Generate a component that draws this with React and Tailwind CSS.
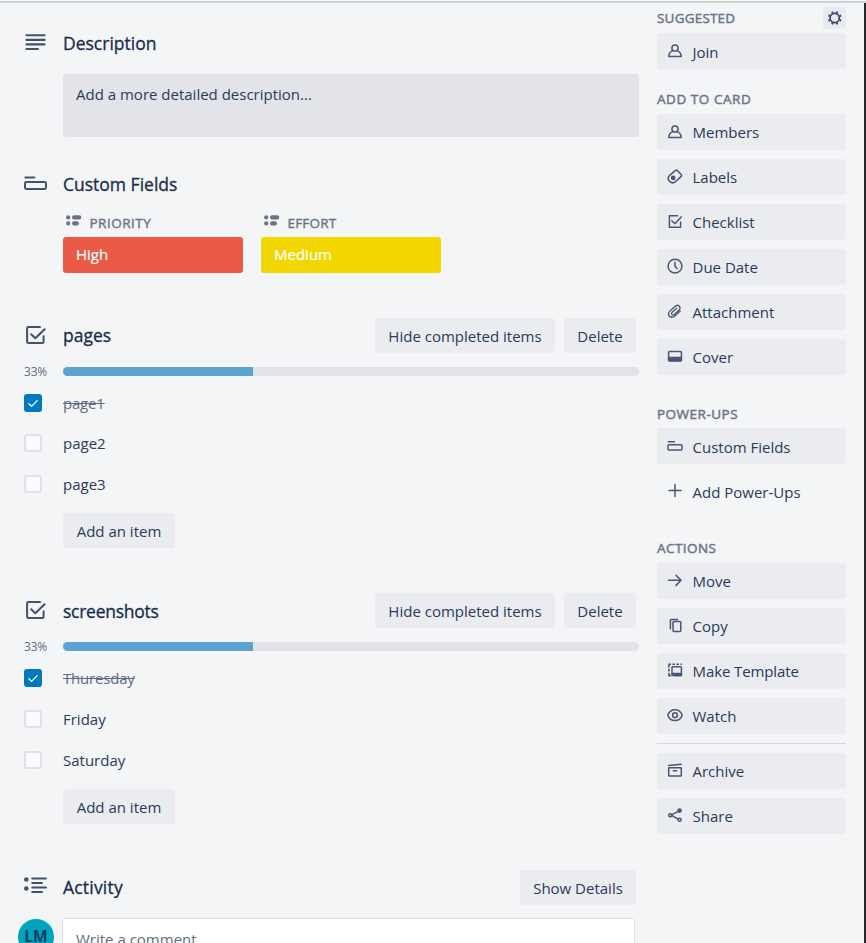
import React from "react";

const S = ({ children, size = 18, className = "", sw = 1.4 }) => (
  <svg
    width={size}
    height={size}
    viewBox={`0 0 ${size} ${size}`}
    fill="none"
    stroke="currentColor"
    strokeWidth={sw}
    strokeLinecap="round"
    strokeLinejoin="round"
    className={`shrink-0 ${className}`}
  >
    {children}
  </svg>
);

const icons = {
  member: (
    <>
      <circle cx="9" cy="6.1" r="3.1" />
      <path d="M7 8.6C4 9.6 2.8 11.4 2.8 14.6H15.2C15.2 11.4 14 9.6 11 8.6" />
    </>
  ),
  label: (
    <>
      <path d="M9.6 2.4L3.6 7.4C1.9 9.2 1.9 11.7 3.6 13.4C5.3 15.1 7.9 15.1 9.7 13.5L15.2 8.4C15.8 7.8 15.7 7.3 15.3 6.8L11.4 2.6C10.9 2.1 10.2 1.9 9.6 2.4Z" />
      <circle cx="7.2" cy="9.9" r="1.6" fill="currentColor" />
    </>
  ),
  check: (
    <>
      <path d="M11.6 2.7H3.4V14.3H14.6V8.9" />
      <path d="M5.8 7.7L8.9 10.8L15.2 3.9" />
    </>
  ),
  clock: (
    <>
      <circle cx="9" cy="8.2" r="6.9" />
      <path d="M9 4.2V8.2L11 10.6" />
    </>
  ),
  clip: (
    <path
      transform="translate(-0.4 -0.6)"
      strokeWidth="1.3"
      d="M14.6 8.6L9.3 13.6C7.6 15.2 5.2 15.2 3.9 13.8C2.6 12.4 2.8 10.2 4.3 8.7L9.7 3.9C10.9 2.8 12.7 2.8 13.7 3.8C14.7 4.9 14.6 6.5 13.5 7.6L8.6 12.1C7.9 12.8 6.9 12.8 6.3 12.2C5.7 11.5 5.8 10.6 6.5 9.9L11 5.8"
    />
  ),
  cover: (
    <>
      <rect x="2.6" y="3.6" width="12.8" height="9.4" rx="1" />
      <path d="M2.6 9.4H15.4V12.6H2.6Z" fill="currentColor" />
    </>
  ),
  fields: (
    <>
      <path d="M2.4 4.8H8.4" />
      <rect x="2" y="7.7" width="14" height="5.2" rx="1" />
    </>
  ),
  plus: <path d="M9 2.6V14.4M3 8.5H15" />,
  arrow: <path d="M2.6 8.3H15M10 3.2L15.1 8.3L10 13.4" />,
  copy: (
    <>
      <rect x="7" y="4.6" width="7.8" height="9.8" rx="0.8" />
      <path d="M4.4 11.8V3.2C4.4 2.7 4.7 2.4 5.2 2.4H11.6" />
    </>
  ),
  template: (
    <>
      <rect x="6" y="4.8" width="9.4" height="8.8" rx="0.8" />
      <path d="M6 11.4H15.4V13.6H9Z" fill="currentColor" />
      <path
        strokeDasharray="2.6 1.4"
        strokeLinecap="butt"
        strokeWidth="1.6"
        d="M2.9 13.4V2.8M2.4 2.2H15.8M2.4 13.6H5.6"
      />
    </>
  ),
  eye: (
    <>
      <path d="M1.8 8.2C3.2 4.6 6 2.8 9 2.8S14.8 4.6 16.2 8.2C14.8 12 12 13.6 9 13.6S3.2 12 1.8 8.2Z" />
      <circle cx="9" cy="8.2" r="2.4" />
    </>
  ),
  archive: (
    <>
      <path d="M2.7 3.6L15.2 2.2" />
      <rect x="2.7" y="5.8" width="12.6" height="8.3" rx="0.6" />
      <path d="M7.4 8.8H10.6" />
    </>
  ),
  share: (
    <>
      <path d="M5 8.2L13.2 3.8M5 8.2L13.2 12.6" />
      <circle cx="4.2" cy="8.2" r="1.5" fill="#eaecf0" />
      <circle cx="13.6" cy="3.6" r="1.6" fill="currentColor" />
      <circle cx="13.6" cy="12.8" r="1.5" fill="#eaecf0" />
    </>
  ),
};

const SideTitle = ({ children, className }) => (
  <h3 className={`text-[13.5px] leading-[18px] text-[#6b7389] [-webkit-text-stroke:0.45px_#6b7389] ${className}`}>
    {children}
  </h3>
);

const SideButton = ({ icon, children, plain, textClass = "" }) => (
  <button
    className={`flex h-9 w-full items-center rounded-[3px] pl-[8.5px] text-left ${plain ? "" : "bg-[#eaecf0]"}`}
  >
    <S sw={1.5} className="text-[#4a5675]">{icons[icon]}</S>
    <span className={`pl-[9px] text-[15px] leading-[22px] text-[#2b3a5b] ${textClass}`}>
      {children}
    </span>
  </button>
);

const Button = ({ children, className }) => (
  <button
    className={`h-[35px] shrink-0 rounded-[3px] bg-[#eaecf0] text-center text-[15px] leading-[36px] whitespace-nowrap text-[#2b3a5b] ${className}`}
  >
    {children}
  </button>
);

const Heading = ({ children, className = "" }) => (
  <h2 className={`flex-1 text-[17.5px] leading-6 text-[#172b4d] [-webkit-text-stroke:0.3px_#172b4d] ${className}`}>
    {children}
  </h2>
);

const FieldGlyph = () => (
  <svg width="16" height="11" viewBox="0 0 16 11" fill="#6b7389" className="shrink-0">
    <circle cx="2.2" cy="2.4" r="2.1" />
    <circle cx="2.2" cy="8.4" r="2.1" />
    <rect x="6" y="0.3" width="9.3" height="4.2" rx="2.1" />
    <rect x="6" y="6.3" width="7" height="4.2" rx="2.1" />
  </svg>
);

const Field = ({ label, value, color, spacing }) => (
  <div className="w-[180px]">
    <div className="flex h-[22px] items-start pl-[3px]">
      <FieldGlyph />
      <span className={`-mt-px pl-[7.5px] text-[13.5px] leading-[18px] text-[#6b7389] [-webkit-text-stroke:0.4px_#6b7389] ${spacing}`}>
        {label}
      </span>
    </div>
    <div className={`h-9 rounded-[3px] pl-[13px] text-[15px] leading-[35px] text-white [-webkit-text-stroke:0.2px_white] ${color}`}>
      {value}
    </div>
  </div>
);

const Item = ({ done, children, className }) => (
  <li className={`flex h-[18px] items-center ${className}`}>
    {done ? (
      <span className="flex size-[18px] items-center justify-center rounded-[3px] bg-[#0079bf]">
        <svg width="12" height="12" viewBox="0 0 12 12" fill="none" stroke="white" strokeWidth="1.3" strokeLinecap="round" strokeLinejoin="round">
          <path d="M1.9 6.8L4.6 9.4L10.2 3.6" />
        </svg>
      </span>
    ) : (
      <span className="size-[18px] rounded-[3px] border-2 border-[#dfe1e6] bg-[#fafbfc]" />
    )}
    <span className={`pl-[21px] text-[15px] leading-[22px] ${done ? "tracking-[-0.2px] text-[#5e6c84] line-through" : "text-[#2b3a5b]"}`}>
      {children}
    </span>
  </li>
);

const Checklist = ({ title, items, className, titleClass, secondGap, addGap }) => (
  <section className={className}>
    <div className="flex h-[35px] items-center pr-[3px]">
      <div className="w-[39px]">
        <S size={24} sw={2}>
          <path d="M16 2.9H4.4C3.6 2.9 3.1 3.4 3.1 4.2V17.7C3.1 18.6 3.6 19.1 4.4 19.1H18.3C19.1 19.1 19.6 18.6 19.6 17.7V12.2" />
          <path d="M7.2 10.2L11.3 14.2L20.6 5.2" />
        </S>
      </div>
      <Heading className={titleClass}>{title}</Heading>
      <Button className="mr-[9px] w-[180px]">Hide completed items</Button>
      <Button className="w-[72px]">Delete</Button>
    </div>
    <div className="mt-[14px] flex h-[9px] items-center">
      <span className="w-[39px] text-[12px] leading-4 tracking-[-0.2px] text-[#5e6c84]">33%</span>
      <div className="h-[9px] flex-1 overflow-hidden rounded-full bg-[#e1e3e8]">
        <div className="h-full w-[33%] bg-[#5ba4cf]" />
      </div>
    </div>
    <ul>
      <Item done className="mt-[18px]">{items[0]}</Item>
      <Item className={secondGap}>{items[1]}</Item>
      <Item className="mt-[22.5px]">{items[2]}</Item>
    </ul>
    <Button className={`ml-[39px] w-28 ${addGap}`}>Add an item</Button>
  </section>
);

export default function App() {
  return (
    <div className="flex h-[943px] w-[866px] flex-col overflow-hidden bg-[#f4f5f7] font-['Open_Sans','Noto_Sans',sans-serif]">
      <div className="h-[3px] shrink-0 border-b-2 border-[#cdd2d4] bg-[#f4f5f7]" />
      <div className="flex min-h-0 flex-1">
        <main className="w-[657px] shrink-0 pl-6 text-[#42526e]">
          <section className="h-[147px] w-[615px] pt-[28px]">
            <div className="flex h-6 items-center">
              <div className="w-[39px]">
                <S size={24} sw={2.1}>
                  <path d="M2.4 4.2H20.6M2.4 8.9H20.6M2.4 13.4H20.6M2.4 18H14" />
                </S>
              </div>
              <Heading>Description</Heading>
            </div>
            <div className="mt-[19px] ml-[39px] h-[63px] rounded-[3px] bg-[#e2e4ea] pt-[9px] pl-[13px] text-[15px] leading-[22px] text-[#2b3a5b]">
              Add a more detailed description...
            </div>
          </section>
          <section className="h-[168px] w-[615px] pt-[22px]">
            <div className="flex h-6 items-center">
              <div className="w-[39px]">
                <S size={24} sw={2}>
                  <path d="M1.4 5.5H10.4" />
                  <rect x="1" y="10" width="21" height="7" rx="1.4" />
                </S>
              </div>
              <Heading>Custom Fields</Heading>
            </div>
            <div className="mt-[19px] ml-[39px] flex gap-[18px]">
              <Field label="PRIORITY" value="High" color="bg-[#eb5a46]" spacing="tracking-[0.5px]" />
              <Field label="EFFORT" value="Medium" color="bg-[#f2d600]" spacing="tracking-[0.2px]" />
            </div>
          </section>
          <Checklist
            className="h-[275px] w-[615px]"
            title="pages"
            titleClass="-mt-0.5"
            items={["page1", "page2", "page3"]}
            secondGap="mt-[22px]"
            addGap="mt-[20.5px]"
          />
          <Checklist
            className="h-[276px] w-[615px]"
            title="screenshots"
            titleClass="tracking-[-0.25px]"
            items={["Thuresday", "Friday", "Saturday"]}
            secondGap="mt-[23px]"
            addGap="mt-[20.5px]"
          />
          <section className="w-[615px]">
            <div className="flex h-9 items-center pr-[3px]">
              <div className="w-[39px]">
                <S size={24} sw={2}>
                  <circle cx="2.3" cy="4.5" r="1.3" fill="currentColor" />
                  <circle cx="2.3" cy="13.5" r="1.3" fill="currentColor" />
                  <path d="M8.2 3.5H22M8.2 8H18M8.2 12.5H22M8.2 17H18" />
                </S>
              </div>
              <Heading className="tracking-[0.2px]">Activity</Heading>
              <Button className="w-[116px]">Show Details</Button>
            </div>
            <div className="-ml-1.5 flex pt-[13px]">
              <div className="mt-px size-9 shrink-0 rounded-full bg-[#00a3bf] text-center text-[15.5px] leading-[35px] font-bold text-[#0d3c61]">
                LM
              </div>
              <div className="ml-2 h-12 w-[573px] rounded-[3px] border border-[#dfe1e6] bg-white pt-[9px] pl-[13px] text-[15px] leading-[22px] text-[#5e6c84]">
                Write a comment...
              </div>
            </div>
          </section>
        </main>
        <aside className="w-[189px] shrink-0">
          <div className="flex h-[30px] items-start justify-between">
            <SideTitle className="pt-1.5 tracking-[0.2px]">SUGGESTED</SideTitle>
            <div className="mt-1 flex h-[22px] w-[23px] items-center justify-center rounded-[3px] bg-[#e9ebf1] text-[#34466a]">
              <S size={16} sw={1.7}>
                <circle cx="7.7" cy="8" r="4.6" />
                <path strokeWidth="2.2" strokeLinecap="butt" d="M9.8 3L10.3 1.7M12.7 5.9L14 5.4M12.7 10.1L14 10.6M9.8 13L10.3 14.3M5.6 13L5.1 14.3M2.7 10.1L1.4 10.6M2.7 5.9L1.4 5.4M5.6 3L5.1 1.7" />
              </S>
            </div>
          </div>
          <SideButton icon="member" textClass="pt-px">Join</SideButton>
          <SideTitle className="mt-[21px] mb-[6px] tracking-[0.55px]">ADD TO CARD</SideTitle>
          <div className="flex flex-col gap-[9px]">
            <SideButton icon="member">Members</SideButton>
            <SideButton icon="label">Labels</SideButton>
            <SideButton icon="check">Checklist</SideButton>
            <SideButton icon="clock">Due Date</SideButton>
            <SideButton icon="clip">Attachment</SideButton>
            <SideButton icon="cover">Cover</SideButton>
          </div>
          <SideTitle className="mt-[30px] mb-[5px] tracking-[0.5px]">POWER-UPS</SideTitle>
          <div className="flex flex-col gap-[9px]">
            <SideButton icon="fields" textClass="pt-px">Custom Fields</SideButton>
            <SideButton icon="plus" plain textClass="pt-px">Add Power-Ups</SideButton>
          </div>
          <SideTitle className="mt-[30px] mb-[6px] tracking-[0.45px]">ACTIONS</SideTitle>
          <div className="flex flex-col gap-[9px]">
            <SideButton icon="arrow">Move</SideButton>
            <SideButton icon="copy">Copy</SideButton>
            <SideButton icon="template" textClass="tracking-[-0.1px]">Make Template</SideButton>
            <SideButton icon="eye">Watch</SideButton>
            <hr className="border-t border-[#d5d8de]" />
            <SideButton icon="archive">Archive</SideButton>
            <SideButton icon="share">Share</SideButton>
          </div>
        </aside>
        <div className="ml-[18px] flex-1 bg-[#24282b]" />
      </div>
    </div>
  );
}
